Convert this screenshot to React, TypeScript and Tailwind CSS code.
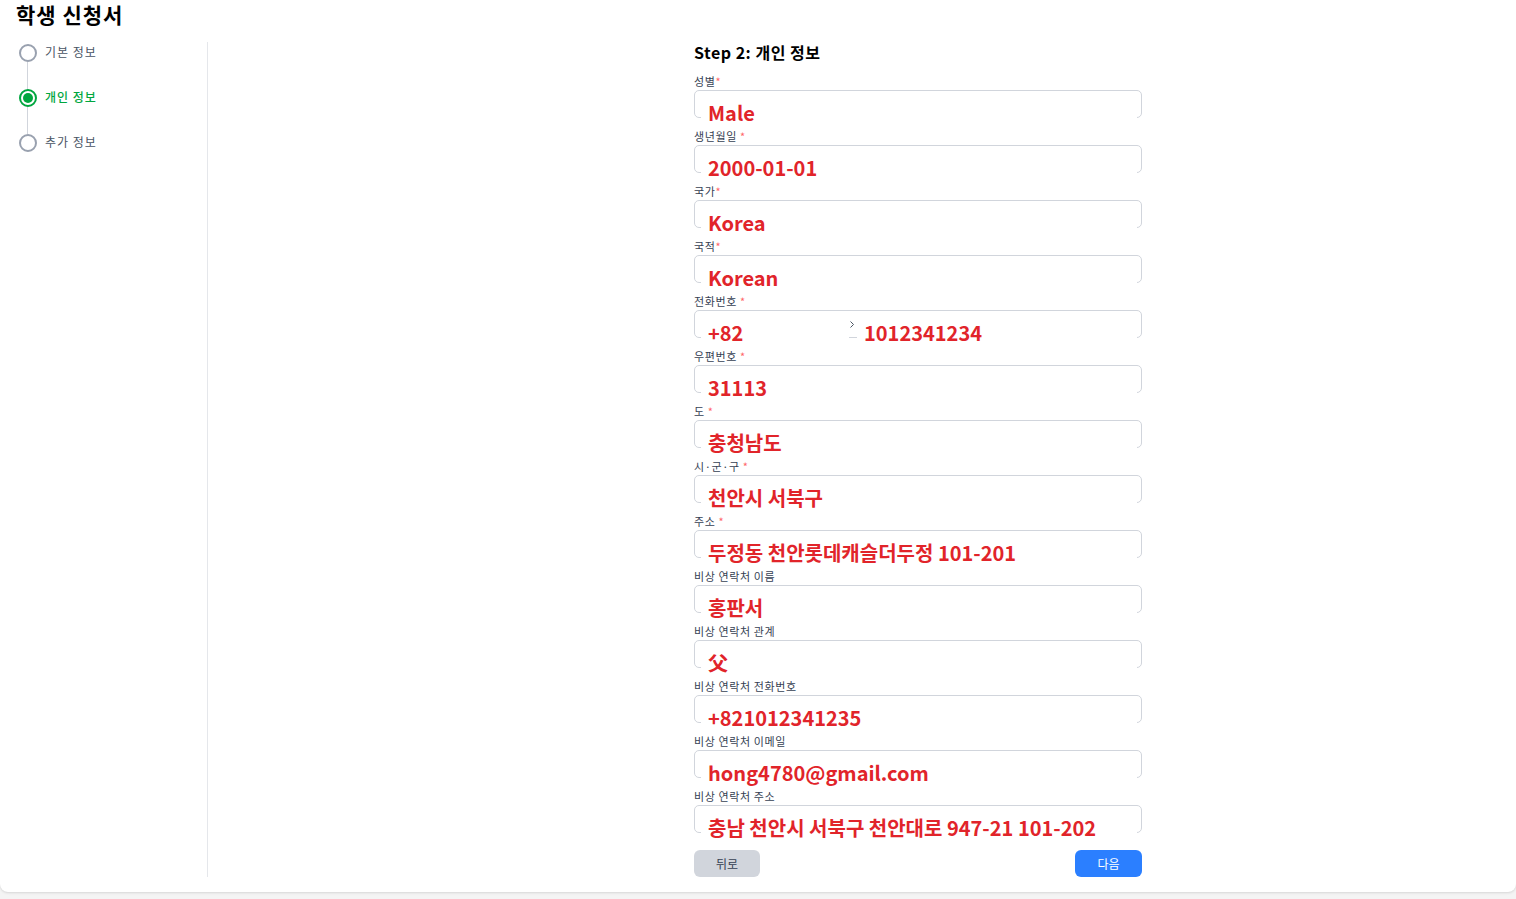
import React from 'react';

type Field = { label: string; star?: 'tight' | 'space'; value: string };

const fields: Field[] = [
    { label: '성별', star: 'tight', value: 'Male' },
    { label: '생년월일', star: 'space', value: '2000-01-01' },
    { label: '국가', star: 'tight', value: 'Korea' },
    { label: '국적', star: 'tight', value: 'Korean' },
    { label: '전화번호', star: 'space', value: 'PHONE' },
    { label: '우편번호', star: 'space', value: '31113' },
    { label: '도', star: 'space', value: '충청남도' },
    { label: '시·군·구', star: 'space', value: '천안시 서북구' },
    { label: '주소', star: 'space', value: '두정동 천안롯데캐슬더두정 101-201' },
    { label: '비상 연락처 이름', value: '홍판서' },
    { label: '비상 연락처 관계', value: '父' },
    { label: '비상 연락처 전화번호', value: '+821012341235' },
    { label: '비상 연락처 이메일', value: 'hong4780@gmail.com' },
    { label: '비상 연락처 주소', value: '충남 천안시 서북구 천안대로 947-21 101-202' },
];

const steps = [
    { label: '기본 정보', active: false },
    { label: '개인 정보', active: true },
    { label: '추가 정보', active: false },
];

const font = { fontFamily: '"Noto Sans CJK KR", "Noto Sans", sans-serif' };

function Overlay({ text, className }: { text: string; className: string }) {
    return (
        <div className={`absolute top-[11px] h-[22px] bg-white pl-[7px] text-[20px] leading-[22px] font-bold text-[#e1242a] whitespace-nowrap ${className}`}>
            {text}
        </div>
    );
}

function FormField({ field }: { field: Field }) {
    return (
        <div className="mb-[13px]">
            <div className="h-[14px] text-[11px] leading-[10px] tracking-[0.6px] text-gray-700">
                {field.label}
                {field.star === 'space' && <span className="text-red-400"> *</span>}
                {field.star === 'tight' && <span className="text-red-400">*</span>}
            </div>
            <div className="relative h-[28px] w-[448px] rounded-[5px] border border-gray-300">
                {field.value === 'PHONE' ? (
                    <>
                        <Overlay text="+82" className="left-[6px] w-[148px]" />
                        <svg className="absolute left-[155px] top-[10px]" width="4" height="7" viewBox="0 0 4 7">
                            <path d="M0.5 0.5l3 3-3 3" fill="none" stroke="#4b5563" strokeWidth="1" />
                        </svg>
                        <Overlay text="1012341234" className="left-[162px] right-[4px]" />
                    </>
                ) : (
                    <Overlay text={field.value} className="left-[6px] right-[4px]" />
                )}
            </div>
        </div>
    );
}

export default function App() {
    return (
        <div className="min-h-screen bg-[#f4f4f4]" style={font}>
            <div className="h-[892px] rounded-b-lg bg-white shadow-sm">
                <h1 className="px-4 text-[21px] leading-7 font-bold tracking-[1px] text-black">학생 신청서</h1>

                <div className="mt-[14px] flex">
                    <aside className="h-[835px] w-[208px] border-r border-gray-200 pt-[2px] pl-[19px]">
                        {steps.map((s, i) => (
                            <div key={s.label}>
                                {i > 0 && <div className="ml-[8px] h-[27px] w-px bg-gray-300" />}
                                <div className="flex items-center gap-2">
                                    {s.active ? (
                                        <div className="h-[18px] w-[18px] rounded-full border-2 border-green-600 p-[2px]">
                                            <div className="h-full w-full rounded-full bg-green-600" />
                                        </div>
                                    ) : (
                                        <div className="h-[18px] w-[18px] rounded-full border-2 border-gray-400" />
                                    )}
                                    <span className={`-mt-[2px] text-xs leading-4 tracking-[1px] ${s.active ? 'font-medium text-green-600' : 'text-gray-600'}`}>
                                        {s.label}
                                    </span>
                                </div>
                            </div>
                        ))}
                    </aside>

                    <main className="pl-[486px]">
                        <h2 className="mb-[14px] text-base leading-5 font-semibold tracking-[0.5px] text-black">Step 2: 개인 정보</h2>
                        {fields.map((f) => (
                            <FormField key={f.label} field={f} />
                        ))}
                        <div className="mt-[17px] flex w-[448px] items-center justify-between">
                            <button className="h-[27px] w-[66px] rounded-md bg-gray-300 text-xs text-gray-700">뒤로</button>
                            <button className="h-[27px] w-[67px] rounded-md bg-blue-500 text-xs text-white">다음</button>
                        </div>
                    </main>
                </div>
            </div>
        </div>
    );
}
